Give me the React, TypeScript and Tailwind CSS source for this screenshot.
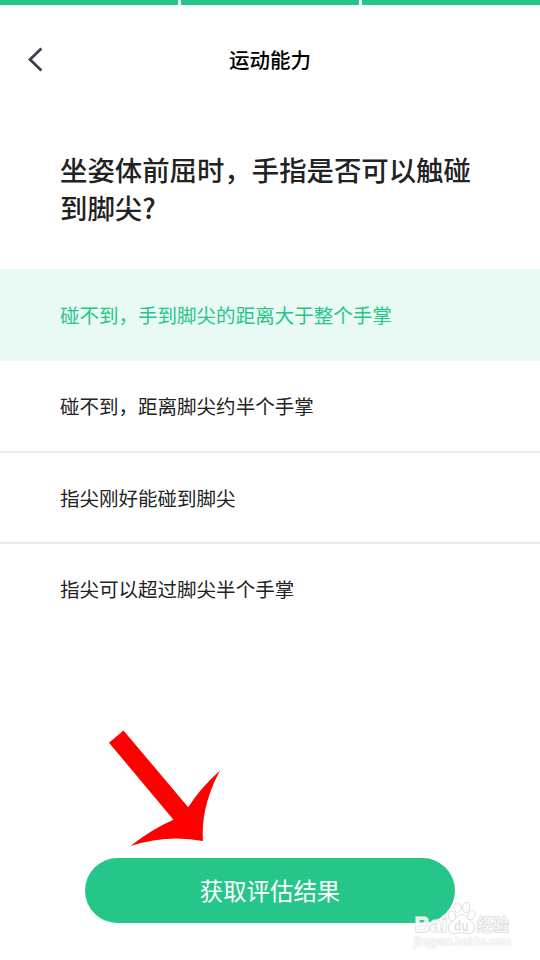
const progress = ["w-[178px]", "w-[178px]", "w-[178px]"];

const options = [
  { label: "碰不到，手到脚尖的距离大于整个手掌", style: "h-[92px] bg-[#e9f9f4] text-[#26c68a]" },
  { label: "碰不到，距离脚尖约半个手掌", style: "h-[92px] border-b-2 border-[#ebebeb] text-[#222222]" },
  { label: "指尖刚好能碰到脚尖", style: "h-[91px] border-b-2 border-[#ebebeb] text-[#222222]" },
  { label: "指尖可以超过脚尖半个手掌", style: "h-[89px] text-[#222222]" },
];

function ProgressBar() {
  return (
    <div className="flex h-[5px] gap-[3px]">
      {progress.map((width, i) => (
        <div key={i} className={`h-full shrink-0 bg-[#26c68a] ${width}`} />
      ))}
    </div>
  );
}

function Header() {
  return (
    <header className="grid h-[108px] grid-cols-[80px_1fr_80px] items-center">
      <button type="button" aria-label="返回" className="pl-7">
        <svg className="h-[26px] w-[15px]" viewBox="0 0 15 26" fill="none">
          <path d="M13.4 2.5L2 13.5L13.4 24.5" stroke="#463b50" strokeWidth="2.8" />
        </svg>
      </button>
      <h1 className="text-center text-[20.5px] font-medium text-black">运动能力</h1>
    </header>
  );
}

function RedArrow() {
  return (
    <svg className="ml-[108px] h-[117px] w-[113px]" viewBox="0 0 113 117">
      <path
        d="M1 12.7L15.5 0.5L80.2 77.2Q92 58.5 112 40.5Q92.5 77 95 111Q59 104 22.5 116Q43 99.5 65.5 89.7Z"
        fill="#ff0000"
      />
    </svg>
  );
}

function Watermark() {
  return (
    <svg
      className="absolute left-[410px] top-[898px] h-[54px] w-[110px]"
      viewBox="0 0 110 54"
      fill="#ffffff"
      fillOpacity="0.8"
      stroke="#dddddd"
      strokeWidth="1"
    >
      <text x="4.5" y="34" fontSize="22" fontWeight="700" fontFamily="Liberation Sans" textLength="33" lengthAdjust="spacingAndGlyphs" paintOrder="stroke" strokeWidth="1.4">
        Bai
      </text>
      <ellipse cx="42" cy="18" rx="3.6" ry="5" transform="rotate(-18 42 18)" />
      <ellipse cx="47.5" cy="9.5" rx="3.6" ry="5" />
      <ellipse cx="56" cy="9.5" rx="3.6" ry="5" transform="rotate(10 56 9.5)" />
      <ellipse cx="61.3" cy="17" rx="3.5" ry="5" transform="rotate(22 61.3 17)" />
      <path d="M51.5 16.5C46.5 16.5 45.5 21.5 41.5 24C36.5 27.5 37.5 35 43.5 35.5C47 35.7 48 34.6 51.5 34.6S56 35.7 59.5 35.5C65.5 35 66.5 27.5 61.5 24C57.5 21.5 56.5 16.5 51.5 16.5Z" />
      <text x="44" y="33" fontSize="14" fontWeight="700" fontFamily="Liberation Sans" textLength="14.5" lengthAdjust="spacingAndGlyphs" fill="#dadada" stroke="none">
        du
      </text>
      <text x="67" y="33" fontSize="17" fontWeight="500" fontFamily="Noto Sans CJK SC" textLength="32" lengthAdjust="spacingAndGlyphs" paintOrder="stroke" strokeWidth="1.6">
        经验
      </text>
      <text x="4" y="47" fontSize="11.5" fontWeight="600" fontFamily="Open Sans" textLength="97" lengthAdjust="spacingAndGlyphs" paintOrder="stroke" stroke="#e8e8e8" strokeWidth="1.2">
        jingyan.baidu.com
      </text>
    </svg>
  );
}

export default function App() {
  return (
    <main className="relative flex h-[960px] w-[540px] flex-col overflow-hidden bg-white font-['Noto_Sans_CJK_SC',sans-serif]">
      <ProgressBar />
      <Header />

      <h2 className="mt-[37px] h-[119px] pl-[60px] text-[27.4px] leading-[38px] font-medium text-[#222222]">
        坐姿体前屈时，手指是否可以触碰
        <br />
        到脚尖?
      </h2>

      <ul className="flex flex-col">
        {options.map((option) => (
          <li key={option.label} className={`flex items-center pl-[60px] text-[19.53px] ${option.style}`}>
            {option.label}
          </li>
        ))}
      </ul>

      <div className="mt-[97px]">
        <RedArrow />
      </div>

      <button
        type="button"
        className="mx-auto mt-[11px] h-[65px] w-[370px] shrink-0 rounded-full bg-[#26c68a] text-[23.4px] text-white"
      >
        获取评估结果
      </button>

      <Watermark />
    </main>
  );
}
